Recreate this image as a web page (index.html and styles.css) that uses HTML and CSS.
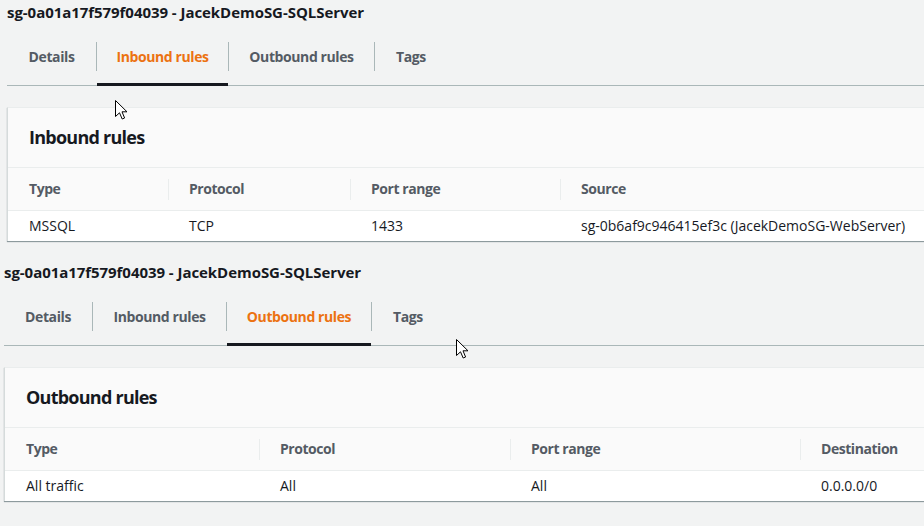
FILE: index.html
```html
<!DOCTYPE html>
<html lang="en">
<head>
<meta charset="utf-8">
<title>Security group rules</title>
<link rel="stylesheet" href="styles.css">
</head>
<body>
<section class="sg sg-in">
  <h1 class="sg-title">sg-0a01a17f579f04039 - JacekDemoSG-SQLServer</h1>
  <nav class="tabs">
    <span class="tab tab-details">Details</span><span class="sep"></span>
    <span class="tab tab-inbound active">Inbound rules</span><span class="sep"></span>
    <span class="tab tab-outbound">Outbound rules</span><span class="sep"></span>
    <span class="tab tab-tags">Tags</span>
  </nav>
  <div class="card">
    <div class="card-head"><h2 class="card-title">Inbound rules</h2></div>
    <div class="rules">
      <div class="row row-head">
        <div class="cell">Type</div>
        <div class="cell">Protocol</div>
        <div class="cell">Port range</div>
        <div class="cell">Source</div>
      </div>
      <div class="row row-body">
        <div class="cell">MSSQL</div>
        <div class="cell">TCP</div>
        <div class="cell">1433</div>
        <div class="cell">sg-0b6af9c946415ef3c (JacekDemoSG-WebServer)</div>
      </div>
    </div>
  </div>
  <svg class="cursor cursor-a" width="13" height="20" viewBox="0 0 13 20"><path d="M0.5 0.5 L0.5 16.5 L4.5 12.8 L7.2 19 L9.6 18 L7 11.8 L12 11.8 Z" fill="#fff" stroke="#000" stroke-width="1" stroke-linejoin="miter"/></svg>
</section>

<section class="sg sg-out">
  <h1 class="sg-title">sg-0a01a17f579f04039 - JacekDemoSG-SQLServer</h1>
  <nav class="tabs">
    <span class="tab tab-details">Details</span><span class="sep"></span>
    <span class="tab tab-inbound">Inbound rules</span><span class="sep"></span>
    <span class="tab tab-outbound active">Outbound rules</span><span class="sep"></span>
    <span class="tab tab-tags">Tags</span>
  </nav>
  <div class="card">
    <div class="card-head"><h2 class="card-title">Outbound rules</h2></div>
    <div class="rules">
      <div class="row row-head">
        <div class="cell">Type</div>
        <div class="cell">Protocol</div>
        <div class="cell">Port range</div>
        <div class="cell">Destination</div>
      </div>
      <div class="row row-body">
        <div class="cell">All traffic</div>
        <div class="cell">All</div>
        <div class="cell">All</div>
        <div class="cell">0.0.0.0/0</div>
      </div>
    </div>
  </div>
  <svg class="cursor cursor-b" width="13" height="20" viewBox="0 0 13 20"><path d="M0.5 0.5 L0.5 16.5 L4.5 12.8 L7.2 19 L9.6 18 L7 11.8 L12 11.8 Z" fill="#fff" stroke="#000" stroke-width="1" stroke-linejoin="miter"/></svg>
</section>
</body>
</html>
```

FILE: styles.css
```css
* { box-sizing: border-box; }

html, body {
  margin: 0;
  padding: 0;
}

body {
  width: 924px;
  height: 526px;
  overflow: hidden;
  background: #f2f3f3;
  font-family: "Open Sans", "Noto Sans", "Liberation Sans", sans-serif;
  font-size: 14px;
  color: #16191f;
}

.sg {
  position: relative;
  margin-bottom: 19px;
  margin-right: -60px;
}

.sg-in { padding-left: 7px; }
.sg-out { padding-left: 4px; }

.sg-title {
  margin: 0;
  height: 25px;
  line-height: 25px;
  font-size: 15px;
  font-weight: 700;
  letter-spacing: -0.05px;
  color: #16191f;
  white-space: nowrap;
}

.tabs {
  display: flex;
  height: 61px;
  border-bottom: 1px solid #aab7b8;
}

.tab {
  flex: none;
  height: 61px;
  margin-bottom: -1px;
  padding-top: 5px;
  display: flex;
  align-items: center;
  justify-content: center;
  font-weight: 700;
  letter-spacing: -0.4px;
  color: #545b64;
  white-space: nowrap;
  border-bottom: 3px solid transparent;
}

.tab.active {
  color: #ec7211;
  border-bottom-color: #16191f;
}

.sg-in .tab-details { width: 89px; }
.sg-in .tab-inbound { width: 131px; }
.sg-in .tab-outbound { width: 145px; }
.sg-in .tab-tags { width: 72px; }

.sg-out .tab-details { width: 88px; }
.sg-out .tab-inbound { width: 133px; }
.sg-out .tab-outbound { width: 144px; }
.sg-out .tab-tags { width: 72px; }

.sep {
  flex: none;
  width: 1px;
  height: 29px;
  margin-top: 17px;
  background: #aab7b8;
}

.card {
  margin-top: 21px;
  background: #fff;
  border-left: 1px solid #d5dbdb;
  border-top: 1px solid #eaeded;
  box-shadow: 0 1px 1px 0 rgba(0, 28, 36, 0.35), 0 1px 0 0 rgba(0, 28, 36, 0.1);
}

.card-head {
  height: 60px;
  display: flex;
  align-items: center;
  padding-left: 21px;
  padding-bottom: 1px;
  background: #fafafa;
  border-bottom: 1px solid #eaeded;
}

.card-title {
  margin: 0;
  font-size: 18px;
  font-weight: 700;
  letter-spacing: -0.75px;
  color: #16191f;
}

.row {
  display: grid;
}

.sg-in .row { grid-template-columns: 160px 182px 210px 1fr; }
.sg-out .row { grid-template-columns: 254px 251px 290px 1fr; }

.cell {
  display: flex;
  align-items: center;
  padding-left: 21px;
  padding-bottom: 1px;
  white-space: nowrap;
}

.row-head {
  height: 43px;
  background: #fafafa;
  border-bottom: 1px solid #eaeded;
}

.row-head .cell {
  font-weight: 700;
  letter-spacing: -0.45px;
  color: #545b64;
}

.row-head .cell + .cell {
  background: linear-gradient(#eaeded, #eaeded) left center / 1px 21px no-repeat;
}

.row-body {
  height: 30px;
  background: #fff;
}

.row-body .cell {
  color: #16191f;
}

.cursor {
  position: absolute;
  display: block;
}

.cursor-a { left: 115px; top: 100px; }
.cursor-b { left: 456px; top: 79px; }
```
